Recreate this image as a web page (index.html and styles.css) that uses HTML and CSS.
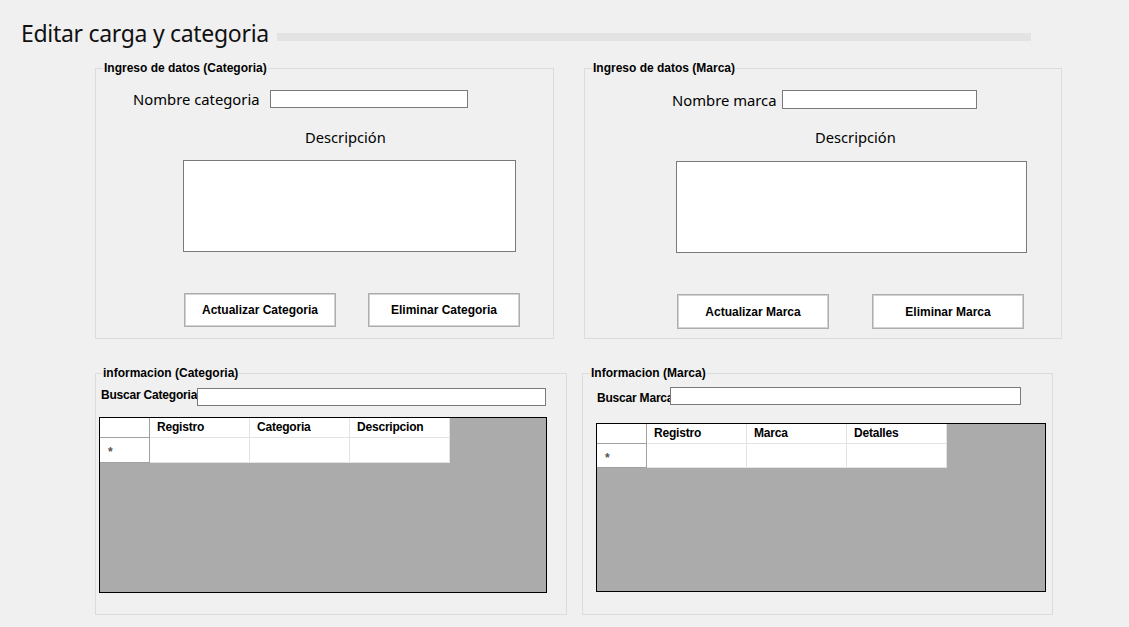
FILE: index.html
```html
<!DOCTYPE html>
<html lang="es">
<head>
<meta charset="utf-8">
<title>Editar carga y categoria</title>
<link rel="stylesheet" href="styles.css">
</head>
<body>
<div class="page">
  <header class="header">
    <h1 class="title">Editar carga y categoria</h1>
    <div class="title-bar"></div>
  </header>

  <div class="row-top">
    <fieldset class="group g-cat">
      <legend class="legend">Ingreso de datos (Categoria)</legend>
      <div class="name-row">
        <label class="lbl lbl-cat">Nombre categoria</label>
        <div class="tb tb-cat"></div>
      </div>
      <div class="desc desc-cat">Descripción</div>
      <div class="area area-cat"></div>
      <div class="btn-row btns-cat">
        <button class="btn">Actualizar Categoria</button>
        <button class="btn">Eliminar Categoria</button>
      </div>
    </fieldset>

    <fieldset class="group g-mar">
      <legend class="legend">Ingreso de datos (Marca)</legend>
      <div class="name-row name-mar">
        <label class="lbl lbl-mar">Nombre marca</label>
        <div class="tb tb-mar"></div>
      </div>
      <div class="desc desc-mar">Descripción</div>
      <div class="area area-mar"></div>
      <div class="btn-row btns-mar">
        <button class="btn">Actualizar Marca</button>
        <button class="btn">Eliminar Marca</button>
      </div>
    </fieldset>
  </div>

  <div class="row-bottom">
    <fieldset class="group g-info-cat">
      <legend class="legend legend-info-cat">informacion (Categoria)</legend>
      <div class="search search-cat">
        <label class="slbl slbl-cat">Buscar Categoria</label>
        <div class="tb stb-cat"></div>
      </div>
      <div class="grid grid-cat">
        <div class="gt gt-cat">
          <div class="c rh hdr"></div>
          <div class="c hdr">Registro</div>
          <div class="c hdr">Categoria</div>
          <div class="c hdr">Descripcion</div>
          <div class="c rh star">*</div>
          <div class="c"></div>
          <div class="c"></div>
          <div class="c"></div>
        </div>
      </div>
    </fieldset>

    <fieldset class="group g-info-mar">
      <legend class="legend legend-info-mar">Informacion (Marca)</legend>
      <div class="search search-mar">
        <label class="slbl slbl-mar">Buscar Marca</label>
        <div class="tb stb-mar"></div>
      </div>
      <div class="grid grid-mar">
        <div class="gt gt-mar">
          <div class="c rh hdr"></div>
          <div class="c hdr">Registro</div>
          <div class="c hdr">Marca</div>
          <div class="c hdr">Detalles</div>
          <div class="c rh star">*</div>
          <div class="c"></div>
          <div class="c"></div>
          <div class="c"></div>
        </div>
      </div>
    </fieldset>
  </div>
</div>
</body>
</html>
```

FILE: styles.css
```css
* { box-sizing: border-box; }

html, body {
  margin: 0;
  padding: 0;
  background: #f0f0f0;
  font-family: "Liberation Sans", Arial, sans-serif;
  color: #000;
}

.page {
  width: 1129px;
  height: 627px;
  overflow: hidden;
}

/* Header */
.header {
  display: flex;
  align-items: flex-start;
  padding: 17px 0 0 21px;
  height: 62px;
}
.title {
  margin: 0;
  width: 256px;
  font-family: "Noto Sans", "Open Sans", sans-serif;
  font-weight: 400;
  font-size: 23px;
  line-height: 32px;
  letter-spacing: -0.3px;
  white-space: nowrap;
  color: #111;
}
.title-bar {
  margin-top: 16px;
  width: 754px;
  height: 8px;
  background: #e3e3e3;
}

/* Group boxes */
.group {
  margin: 0;
  padding: 0;
  min-width: 0;
  border: 1px solid #dcdcdc;
  display: flex;
  flex-direction: column;
  align-items: flex-start;
}
.legend {
  padding: 0 1px;
  margin-left: 7px;
  font-size: 12px;
  font-weight: 700;
  line-height: 13px;
  white-space: nowrap;
}
.legend-info-cat { margin-left: 6px; }
.legend-info-mar { margin-left: 7px; }

.row-top {
  display: flex;
  align-items: stretch;
  gap: 30px;
  padding-left: 95px;
}
.g-cat { width: 459px; }
.g-mar { width: 478px; }

.row-bottom {
  display: flex;
  align-items: stretch;
  gap: 15px;
  padding-left: 95px;
  margin-top: 28px;
}
.g-info-cat { width: 472px; }
.g-info-mar { width: 471px; }

/* Inputs */
.tb {
  background: #fff;
  border: 1px solid #7a7a7a;
  height: 18px;
}
.name-row {
  display: flex;
  align-items: center;
  margin-top: 15px;
  padding-left: 37px;
}
.lbl {
  font-family: "Noto Sans", "Open Sans", sans-serif;
  font-size: 14.8px;
  line-height: 18px;
  white-space: nowrap;
}
.lbl-cat { width: 137px; }
.tb-cat { width: 198px; }

.name-mar { padding-left: 87px; align-items: flex-start; }
.lbl-mar { width: 110px; margin-top: 1px; }
.tb-mar { width: 195px; height: 19px; }

.desc {
  font-family: "Noto Sans", "Open Sans", sans-serif;
  font-size: 14.7px;
  line-height: 20px;
  white-space: nowrap;
}
.desc-cat { margin-top: 19px; padding-left: 209px; }
.desc-mar { margin-top: 18px; padding-left: 230px; }

.area {
  background: #fff;
  border: 1px solid #7a7a7a;
  height: 92px;
}
.area-cat { margin: 13px 0 0 87px; width: 333px; }
.area-mar { margin: 14px 0 0 91px; width: 351px; }

/* Buttons */
.btn-row { display: flex; }
.btns-cat { margin: 41px 0 9px 88px; gap: 32px; }
.btns-mar { margin: 41px 0 9px 92px; gap: 43px; }
.btn {
  width: 152px;
  height: 34px;
  margin: 0;
  padding: 0;
  background: #fff;
  border: 1px solid #adadad;
  box-shadow: inset 0 0 0 1px #d2d2d2;
  font-family: "Liberation Sans", Arial, sans-serif;
  font-size: 12px;
  font-weight: 700;
  color: #000;
}
.btns-mar .btn { height: 35px; }

/* Search rows */
.search {
  display: flex;
  align-items: flex-start;
}
.slbl {
  font-size: 12px;
  font-weight: 700;
  line-height: 13px;
  white-space: nowrap;
  letter-spacing: -0.2px;
}
.search-cat { margin-top: 8px; padding-left: 5px; }
.slbl-cat { width: 96px; margin-top: 1px; }
.stb-cat { width: 349px; }

.search-mar { margin-top: 7px; padding-left: 14px; }
.slbl-mar { width: 73px; margin-top: 5px; }
.stb-mar { width: 351px; }

/* Data grids */
.grid {
  background: #ababab;
  border: 1px solid #000;
}
.grid-cat { margin: 11px 0 21px 3px; width: 448px; height: 176px; }
.grid-mar { margin: 18px 0 0 13px; width: 450px; height: 169px; }

.gt {
  display: grid;
  grid-template-columns: 50px 100px 100px 100px;
  width: 350px;
}
.gt-cat { grid-template-rows: 20px 25px; }
.gt-mar { grid-template-rows: 20px 24px; }

.c {
  background: #fff;
  border-right: 1px solid #e3e3e3;
  border-bottom: 1px solid #e3e3e3;
  font-size: 12px;
  font-weight: 700;
  line-height: 13px;
  white-space: nowrap;
}
.hdr {
  display: flex;
  align-items: center;
  padding-left: 7px;
  letter-spacing: -0.2px;
}
.rh {
  border-right: 1px solid #a0a0a0;
  border-bottom: 1px solid #a0a0a0;
}
.hdr.rh { padding-left: 0; }
.star {
  padding: 8px 0 0 8px;
  font-size: 12px;
  color: #555;
}
```
